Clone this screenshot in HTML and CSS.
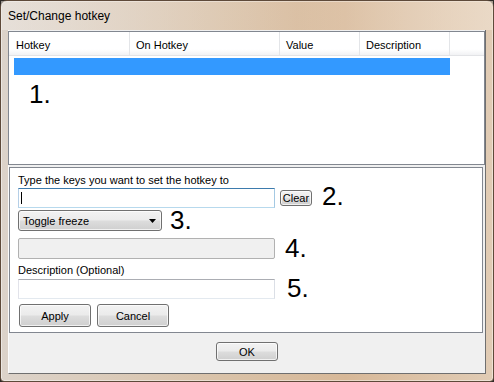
FILE: index.html
```html
<!DOCTYPE html>
<html lang="en">
<head>
    <meta charset="UTF-8">
    <title>Set/Change hotkey</title>
    <link rel="stylesheet" href="styles.css">
</head>
<body>
    <div class="window">
        <div class="titlebar">Set/Change hotkey</div>
        <div class="client">
            <div class="listview">
                <div class="lv-header">
                    <div class="col col-hotkey">Hotkey</div>
                    <div class="col col-on">On Hotkey</div>
                    <div class="col col-value">Value</div>
                    <div class="col col-desc">Description</div>
                    <div class="col col-fill"></div>
                </div>
                <div class="lv-row selected"></div>
                <div class="marker marker-list">1.</div>
            </div>

            <div class="panel">
                <div class="label">Type the keys you want to set the hotkey to</div>
                <div class="row row-keys">
                    <div class="textbox focused"><span class="caret"></span></div>
                    <button class="btn btn-clear">Clear</button>
                    <span class="marker marker-2">2.</span>
                </div>
                <div class="row row-type">
                    <div class="dropdown">
                        <span>Toggle freeze</span>
                        <svg class="arrow" width="7" height="4" viewBox="0 0 7 4"><polygon points="0,0 7,0 3.5,4" fill="#000"/></svg>
                    </div>
                    <span class="marker marker-3">3.</span>
                </div>
                <div class="row row-value">
                    <div class="textbox disabled"></div>
                    <span class="marker marker-4">4.</span>
                </div>
                <div class="label label-desc">Description (Optional)</div>
                <div class="row row-desc">
                    <div class="textbox"></div>
                    <span class="marker marker-5">5.</span>
                </div>
                <div class="row row-actions">
                    <button class="btn btn-apply">Apply</button>
                    <button class="btn btn-cancel">Cancel</button>
                </div>
            </div>

            <div class="footer">
                <button class="btn btn-ok">OK</button>
            </div>
        </div>
    </div>
</body>
</html>
```

FILE: styles.css
```css
* {
    box-sizing: border-box;
}
body {
    margin: 0;
    background-color: #2e2a26;
    font-family: "Liberation Sans", Arial, sans-serif;
    font-size: 11px;
    color: #000;
}
.window {
    width: 494px;
    height: 382px;
    padding: 0 8px 8px 8px;
    border: 1px solid #5e4a3a;
    border-radius: 7px 7px 4px 4px;
    background: linear-gradient(90deg, #dcd3ca 0%, #d9c2a8 45%, #d7b898 70%, #e1ccb5 100%);
    box-shadow: inset 0 0 0 1px rgba(255, 255, 255, 0.45);
}
.titlebar {
    height: 29px;
    line-height: 30px;
    margin-left: -1px;
    font-size: 12px;
    color: #000;
    background: linear-gradient(90deg, rgba(240, 236, 232, 0.5), rgba(230, 210, 190, 0.2) 60%, rgba(240, 226, 210, 0.6));
    margin-right: -8px;
    margin-left: -8px;
    padding-left: 7px;
}
.client {
    width: 478px;
    height: 344px;
    margin-left: -1px;
    background-color: #f0f0f0;
    border-right: 1px solid #6f6f6f;
    border-bottom: 1px solid #6f6f6f;
    border-left: 1px solid #fbfbfb;
    display: flex;
    flex-direction: column;
}

/* list view */
.listview {
    height: 134px;
    margin-top: 1px;
    margin-left: -1px;
    border: 1px solid #828790;
    background-color: #fff;
}
.lv-header {
    display: flex;
    height: 24px;
    background: linear-gradient(#ffffff 0%, #ffffff 75%, #f1f2f4 100%);
    border-bottom: 1px solid #e2e3e6;
}
.col {
    padding: 7px 0 0 6px;
    line-height: 13px;
    border-right: 1px solid #e3e5e8;
    white-space: nowrap;
}
.col-hotkey {
    width: 121px;
    padding-left: 7px;
}
.col-on {
    width: 150px;
}
.col-value {
    width: 80px;
}
.col-desc {
    width: 90px;
}
.col-fill {
    flex: 1;
    border-right: none;
}
.lv-row.selected {
    width: 436px;
    height: 17px;
    margin: 2px 0 0 5px;
    background-color: #3399ff;
}
.marker {
    font-size: 26px;
    line-height: 20px;
    white-space: nowrap;
}
.marker-list {
    line-height: 26px;
    margin: 6px 0 0 20px;
}

/* edit panel */
.panel {
    height: 166px;
    margin: 2px 2px 0 0;
    border: 1px solid #828790;
    background-color: #fff;
    padding: 6px 8px 0 8px;
}
.label {
    line-height: 13px;
    height: 13px;
}
.row {
    display: flex;
    align-items: center;
}
.row-keys {
    margin-top: 1px;
    height: 20px;
}
.row-type {
    margin-top: 2px;
    height: 21px;
}
.row-value {
    margin-top: 7px;
    height: 21px;
}
.label-desc {
    margin-top: 5px;
}
.row-desc {
    margin-top: 2px;
    height: 20px;
}
.row-actions {
    margin-top: 5px;
    height: 23px;
}
.textbox {
    width: 257px;
    height: 20px;
    border: 1px solid #abadb3;
    border-color: #abadb3 #dbdfe6 #e3e9ef #e2e3ea;
    background-color: #fff;
    position: relative;
}
.textbox.focused {
    border-color: #3d7bad #a4c9e3 #b7d9ed #b5cfe7;
}
.textbox.disabled {
    height: 21px;
    border: 1px solid #b1b1b1;
    border-radius: 2px;
    background-color: #f0f0f0;
}
.caret {
    position: absolute;
    left: 2px;
    top: 3px;
    width: 1px;
    height: 12px;
    background-color: #000;
}
.btn {
    font-family: "Liberation Sans", Arial, sans-serif;
    font-size: 11px;
    color: #000;
    padding: 0;
    border: 1px solid #707070;
    border-radius: 3px;
    background: linear-gradient(#f2f2f2 0%, #ebebeb 48%, #dddddd 52%, #cfcfcf 100%);
    box-shadow: inset 0 0 0 1px rgba(255, 255, 255, 0.7);
}
.btn-clear {
    width: 32px;
    height: 16px;
    margin-left: 5px;
    line-height: 13px;
}
.marker-2 {
    margin: 0 0 4px 10px;
}
.dropdown {
    width: 144px;
    height: 21px;
    display: flex;
    align-items: center;
    justify-content: space-between;
    padding: 0 5px 0 4px;
    border: 1px solid #707070;
    border-radius: 3px;
    background: linear-gradient(#f2f2f2 0%, #ebebeb 48%, #dddddd 52%, #cfcfcf 100%);
    box-shadow: inset 0 0 0 1px rgba(255, 255, 255, 0.7);
}
.marker-3 {
    margin: 0 0 2px 8px;
}
.marker-4 {
    margin: 0 0 2px 10px;
}
.marker-5 {
    margin: 0 0 2px 12px;
}
.btn-apply {
    width: 72px;
    height: 23px;
    margin-left: 1px;
}
.btn-cancel {
    width: 72px;
    height: 23px;
    margin-left: 6px;
}

/* footer */
.footer {
    flex: 1;
    display: flex;
    justify-content: center;
    align-items: flex-start;
    padding-top: 9px;
}
.btn-ok {
    width: 62px;
    height: 19px;
}
```
